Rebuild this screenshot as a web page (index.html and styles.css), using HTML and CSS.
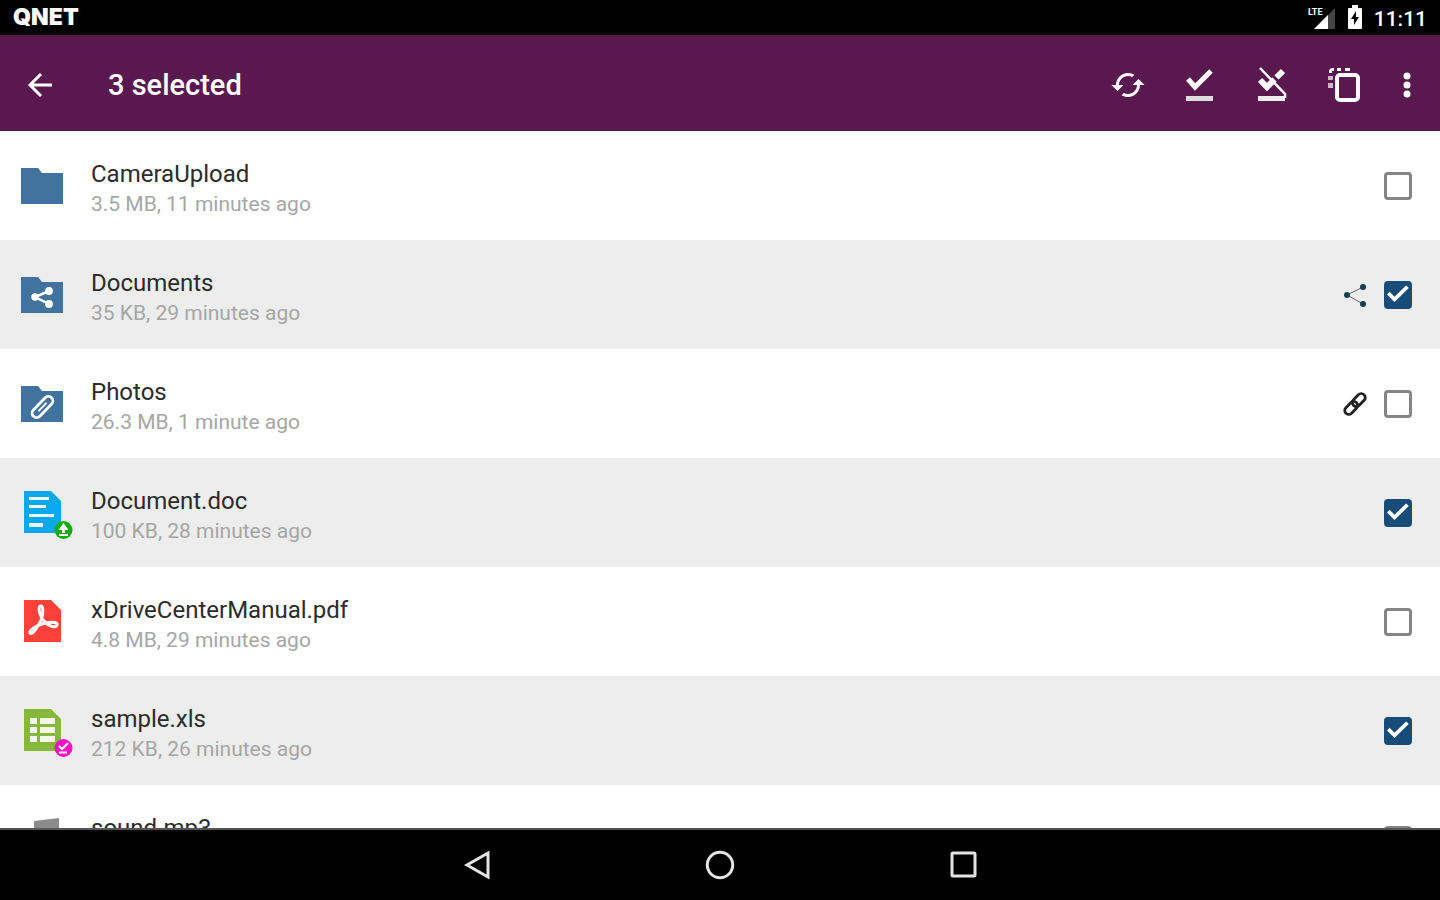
FILE: index.html
```html
<!DOCTYPE html>
<html lang="en">
<head>
    <meta charset="UTF-8">
    <meta name="viewport" content="width=device-width, initial-scale=1.0">
    <title>QNET</title>
    <link rel="stylesheet" href="styles.css">
</head>
<body>
    <!-- Status bar -->
    <div class="status-bar">
        <span class="brand">QNET</span>
        <div class="status-icons">
            <svg class="signal" width="28" height="26" viewBox="0 0 28 26">
                <path d="M27 4V25H6z" fill="#444"/>
                <path d="M20 11V25H6z" fill="#fff"/>
                <text x="0" y="11" class="lte">LTE</text>
            </svg>
            <svg width="14" height="24" viewBox="0 0 14 24">
                <path d="M4 0h6v3h3a1 1 0 0 1 1 1v19a1 1 0 0 1-1 1H1a1 1 0 0 1-1-1V4a1 1 0 0 1 1-1h3z" fill="#fff"/>
                <path d="M8 6L3 14h3v6l5-8H8z" fill="#000"/>
            </svg>
            <span class="clock">11:11</span>
        </div>
    </div>

    <!-- Selection toolbar -->
    <header class="toolbar">
        <button class="back" aria-label="Back">
            <svg width="32" height="32" viewBox="0 0 32 32" fill="none" stroke="#fff" stroke-width="3">
                <path d="M28 16H6M17 5L6 16l11 11"/>
            </svg>
        </button>
        <h1>3 selected</h1>
        <div class="actions">
            <button aria-label="Sync">
                <svg width="36" height="36" viewBox="0 0 24 24" fill="#fff">
                    <path d="M19 8l-4 4h3c0 3.31-2.69 6-6 6-1.01 0-1.97-.25-2.8-.7l-1.46 1.46C8.97 19.54 10.43 20 12 20c4.42 0 8-3.58 8-8h3l-4-4zM6 12c0-3.31 2.69-6 6-6 1.01 0 1.97.25 2.8.7l1.46-1.46C15.03 4.46 13.57 4 12 4c-4.42 0-8 3.58-8 8H1l4 4 4-4H6z"/>
                </svg>
            </button>
            <button aria-label="Make available offline">
                <svg width="40" height="40" viewBox="0 0 40 40">
                    <path d="M8 14l7 8L31 6" fill="none" stroke="#fff" stroke-width="5"/>
                    <path d="M6 31h27v5H6z" fill="#ddd"/>
                </svg>
            </button>
            <button aria-label="Remove offline copy">
                <svg width="40" height="40" viewBox="0 0 40 40">
                    <path d="M8 15l7 7L31 6" fill="none" stroke="#fff" stroke-width="6"/>
                    <path d="M6 31h27v5H6z" fill="#eee"/>
                    <path d="M11 1L38 28" stroke="#59194f" stroke-width="3"/>
                    <path d="M8 3l25 26v4" fill="none" stroke="#fff" stroke-width="2.500"/>
                </svg>
            </button>
            <button aria-label="Copy">
                <svg width="40" height="40" viewBox="0 0 40 40" fill="#fff">
                    <rect x="13" y="10" width="21" height="25" rx="3" fill="none" stroke="#fff" stroke-width="4"/>
                    <path d="M5 7a4 4 0 0 1 4-4h1v3H8v2H5zM13 3h4v3h-4zM21 3h5v3h-5z"/>
                    <path d="M4 11h5v4H4zM4 18h5v5H4z" fill="#cbb5c8"/>
                </svg>
            </button>
            <button class="more" aria-label="More options">
                <svg width="10" height="30" viewBox="0 0 10 30" fill="#fff">
                    <circle cx="5" cy="6" r="3.500"/><circle cx="5" cy="15" r="3.500"/><circle cx="5" cy="24" r="3.500"/>
                </svg>
            </button>
        </div>
    </header>

    <!-- File list -->
    <ul class="files">
        <li class="file">
            <svg class="file-icon" viewBox="0 0 56 55">
                <path d="M1 10h17l4 5h21v31H1z" fill="#42739f"/>
            </svg>
            <label for="f1"><span class="name">CameraUpload</span><span class="info">3.5 MB, 11 minutes ago</span></label>
            <input type="checkbox" id="f1">
        </li>
        <li class="file selected">
            <svg class="file-icon" viewBox="0 0 56 55">
                <path d="M1 10h17l4 5h21v31H1z" fill="#42739f"/>
                <path d="M29 24L15 30l14 7" fill="none" stroke="#fff" stroke-width="2.500"/>
                <g fill="#fff"><circle cx="15" cy="30" r="3.700"/><circle cx="29" cy="24" r="3.900"/><circle cx="29" cy="37" r="3.900"/></g>
            </svg>
            <label for="f2"><span class="name">Documents</span><span class="info">35 KB, 29 minutes ago</span></label>
            <svg class="mark" viewBox="0 0 24 24">
                <path d="M20 4L4 12l16 9" fill="none" stroke="#666" stroke-width="1"/>
                <g fill="#123f50"><circle cx="4" cy="12" r="3"/><circle cx="20" cy="4" r="3"/><circle cx="20" cy="21" r="3"/></g>
            </svg>
            <input type="checkbox" id="f2" checked>
        </li>
        <li class="file">
            <svg class="file-icon" viewBox="0 0 56 55">
                <path d="M1 10h17l4 5h21v31H1z" fill="#42739f"/>
                <g transform="translate(22.500 31) rotate(-46)" fill="none" stroke="#fff" stroke-width="2.800" stroke-linecap="round">
                    <rect x="-13" y="-4.500" width="26" height="9" rx="4.500"/>
                    <path d="M-5 0H5" stroke-width="2"/>
                </g>
            </svg>
            <label for="f3"><span class="name">Photos</span><span class="info">26.3 MB, 1 minute ago</span></label>
            <svg class="mark" viewBox="0 0 24 24">
                <g transform="translate(12 12) rotate(-46)" fill="none" stroke="#222" stroke-width="2.800">
                    <rect x="-13" y="-4" width="15" height="8" rx="4"/>
                    <rect x="-2" y="-4" width="15" height="8" rx="4"/>
                </g>
            </svg>
            <input type="checkbox" id="f3">
        </li>
        <li class="file selected">
            <svg class="file-icon" viewBox="0 0 56 55">
                <path d="M4 6h27l10 10v32H4z" fill="#0aa8ec"/>
                <path d="M9 12h20v3H9zM9 20h17v3H9zM9 29h25v3H9zM9 38h14v4H9z" fill="#e9f7fd"/>
                <circle cx="43.500" cy="45" r="9" fill="#12ad0c"/>
                <path d="M43.500 38l5 7h-3.500v3h-3v-3h-3.500zM39 49h9v2h-9z" fill="#fff"/>
            </svg>
            <label for="f4"><span class="name">Document.doc</span><span class="info">100 KB, 28 minutes ago</span></label>
            <input type="checkbox" id="f4" checked>
        </li>
        <li class="file">
            <svg class="file-icon" viewBox="0 0 56 55">
                <path d="M4 6h27l10 10v32H4z" fill="#fc413a"/>
                <path d="M21 12c-4 0-1 11 3 15 4 5 12 8 13 4 1-4-9-3-15-1-6 2-13 6-12 9 2 3 9-8 11-13 3-7 2-14 0-14z" fill="none" stroke="#fff" stroke-width="3"/>
            </svg>
            <label for="f5"><span class="name">xDriveCenterManual.pdf</span><span class="info">4.8 MB, 29 minutes ago</span></label>
            <input type="checkbox" id="f5">
        </li>
        <li class="file selected">
            <svg class="file-icon" viewBox="0 0 56 55">
                <path d="M4 6h27l10 10v32H4z" fill="#86b93b"/>
                <path d="M10 15h7v6h-7zM20 15h15v6H20zM10 24h7v6h-7zM20 24h15v6H20zM10 33h7v6h-7zM20 33h15v6H20z" fill="#f3f8ea"/>
                <circle cx="43.500" cy="45" r="9" fill="#fb0fc6"/>
                <path d="M39 43l3 3 6-6M39 49.500h8" fill="none" stroke="#fff" stroke-width="2"/>
            </svg>
            <label for="f6"><span class="name">sample.xls</span><span class="info">212 KB, 26 minutes ago</span></label>
            <input type="checkbox" id="f6" checked>
        </li>
        <li class="file">
            <svg class="file-icon" viewBox="0 0 56 55">
                <path d="M14 9l25-3v32a6 6 0 1 1-4-6V18l-17 2v21a6 6 0 1 1-4-6z" fill="#8c8c8c"/>
            </svg>
            <label for="f7"><span class="name">sound.mp3</span></label>
            <input type="checkbox" id="f7">
        </li>
    </ul>

    <!-- System navigation -->
    <nav class="nav-bar">
        <button aria-label="Back">
            <svg width="32" height="32" viewBox="0 0 32 32"><path d="M27 4v24L6 16z"/></svg>
        </button>
        <button aria-label="Home">
            <svg width="32" height="32" viewBox="0 0 32 32"><circle cx="16" cy="16" r="12.700"/></svg>
        </button>
        <button aria-label="Recent apps">
            <svg width="32" height="32" viewBox="0 0 32 32"><rect x="5" y="4" width="23" height="23" rx="1"/></svg>
        </button>
    </nav>
</body>
</html>
```
FILE: styles.css
```css
* {
    box-sizing: border-box;
}
body {
    margin: 0;
    height: 100vh;
    display: flex;
    flex-direction: column;
    overflow: hidden;
    font-family: Roboto, sans-serif;
    background: #fff;
}
svg {
    display: block;
    flex-shrink: 0;
}
button {
    display: flex;
    align-items: center;
    justify-content: center;
    padding: 0;
    border: none;
    background: none;
    cursor: pointer;
}
.status-bar {
    height: 35px;
    flex-shrink: 0;
    display: flex;
    align-items: center;
    justify-content: space-between;
    padding: 0 13px 2px;
    background: #000;
    color: #fff;
}
.brand {
    font-family: Inter, sans-serif;
    font-size: 23px;
    font-weight: 900;
    line-height: 32px;
}
.status-icons {
    display: flex;
    align-items: center;
    gap: 12px;
}
.lte {
    font-size: 9px;
    font-weight: bold;
    fill: #fff;
}
.clock {
    font-size: 21px;
    font-weight: 500;
    line-height: 24px;
    padding-top: 4px;
}
.toolbar {
    height: 96px;
    flex-shrink: 0;
    display: flex;
    align-items: center;
    padding: 4px 6px 0 4px;
    background: #59194f;
    color: #fff;
}
.back {
    width: 72px;
    height: 72px;
}
h1 {
    flex: 1;
    margin: 0 0 0 32px;
    font-size: 29px;
    font-weight: 500;
    line-height: 40px;
}
.actions {
    display: flex;
}
.actions button {
    width: 72px;
    height: 72px;
}
.actions .more {
    width: 54px;
}
.files {
    flex: 1;
    min-height: 0;
    margin: 0;
    padding: 0;
    overflow: hidden;
    list-style: none;
}
.file {
    height: 109px;
    display: flex;
    align-items: center;
    padding: 0 28px 0 20px;
}
.selected {
    background: #ededed;
}
.file-icon {
    width: 56px;
    height: 55px;
}
.file label {
    flex: 1;
    min-height: 66px;
    padding: 6px 0 0 15px;
}
.name, .info {
    display: block;
    line-height: 30px;
}
.name {
    font-size: 24px;
    color: #2b2b2b;
}
.info {
    font-size: 21px;
    color: #a6a6a6;
}
.mark {
    width: 24px;
    height: 24px;
    margin-right: 17px;
}
input[type="checkbox"] {
    appearance: none;
    width: 28px;
    height: 28px;
    margin: 0;
    border: 3px solid #858585;
    border-radius: 4px;
    background: #fff;
}
input[type="checkbox"]:checked {
    border-color: #174c78;
    background: #174c78;
}
input[type="checkbox"]:checked::after {
    content: "";
    display: block;
    height: 22px;
    background: #fff;
    clip-path: polygon(0 50%, 12% 38%, 34% 60%, 87% 9%, 99% 21%, 34% 84%);
}
.nav-bar {
    height: 72px;
    flex-shrink: 0;
    display: flex;
    align-items: center;
    justify-content: center;
    gap: 163px;
    border-top: 2px solid #555;
    background: #000;
}
.nav-bar button {
    width: 80px;
    height: 64px;
}
.nav-bar svg {
    fill: none;
    stroke: #e4e4e4;
    stroke-width: 3;
}
```
